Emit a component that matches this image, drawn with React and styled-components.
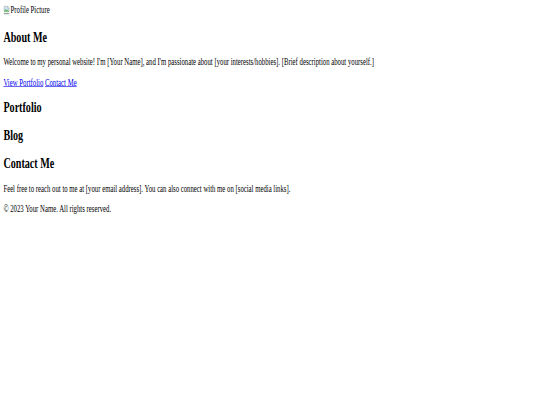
import React from "react";
import styled, { createGlobalStyle } from "styled-components";

const GlobalStyle = createGlobalStyle`
  html, body {
    margin: 0;
    padding: 0;
    background: #ffffff;
  }

  #root {
    width: 540px;
    height: 405px;
    overflow: hidden;
  }
`;

// the page was captured at 1280 wide and squeezed into 540x405
const Page = styled.div`
  width: 1280px;
  padding: 8px;
  box-sizing: border-box;
  font-family: "Liberation Serif", "Times New Roman", serif;
  font-size: 16px;
  color: #000000;
  transform: scale(0.422, 0.595);
  transform-origin: 0 0;
`;

const Header = styled.header`
  line-height: normal;
`;

const ImgAlt = styled.span`
  display: inline-flex;
  align-items: center;
  gap: 1px;
  color: #000000;
`;

const Section = styled.section``;

const Heading = styled.h2`
  font-size: 24px;
  font-weight: bold;
  margin: 0.83em 0;
`;

const Text = styled.p`
  margin: 1em 0;
`;

const Link = styled.a`
  color: #0000ee;
  text-decoration: underline;
  cursor: pointer;
`;

const BrokenImage = () => (
  <svg width="16" height="16" viewBox="0 0 16 16">
    <path d="M1.5 1.5h9l3 3v5l-2 1.5-2-1.5-2 1.5-2-1.5-2 1.5-2-1.5z" fill="#cfe3f5" stroke="#9a9a9a" strokeWidth="1" />
    <path d="M10.5 1.5v3h3" fill="#ffffff" stroke="#9a9a9a" strokeWidth="1" />
    <path d="M2 9.5l3-3.5 2.5 2.5 2-1.5 3.5 2.5v0.5l-1.5 1-2-1.5-2 1.5-2-1.5-2 1.5-1.5-1z" fill="#5cb85c" />
    <path d="M1.5 12.5l2 1.5 2-1.5 2 1.5 2-1.5 2 1.5 2-1.5v2h-12z" fill="#5cb85c" stroke="#9a9a9a" strokeWidth="1" />
  </svg>
);

export default function App() {
  return (
    <>
      <GlobalStyle />
      <Page>
        <Header>
          <ImgAlt>
            <BrokenImage />
            Profile Picture
          </ImgAlt>
        </Header>

        <Section>
          <Heading>About Me</Heading>
          <Text>
            Welcome to my personal website! I'm [Your Name], and I'm passionate about
            [your interests/hobbies]. [Brief description about yourself.]
          </Text>
          <Text>
            <Link href="#portfolio">View Portfolio</Link>{" "}
            <Link href="#contact">Contact Me</Link>
          </Text>
        </Section>

        <Section id="portfolio">
          <Heading>Portfolio</Heading>
        </Section>

        <Section>
          <Heading>Blog</Heading>
        </Section>

        <Section id="contact">
          <Heading>Contact Me</Heading>
          <Text>
            Feel free to reach out to me at [your email address]. You can also connect
            with me on [social media links].
          </Text>
        </Section>

        <footer>
          <Text>© 2023 Your Name. All rights reserved.</Text>
        </footer>
      </Page>
    </>
  );
}
